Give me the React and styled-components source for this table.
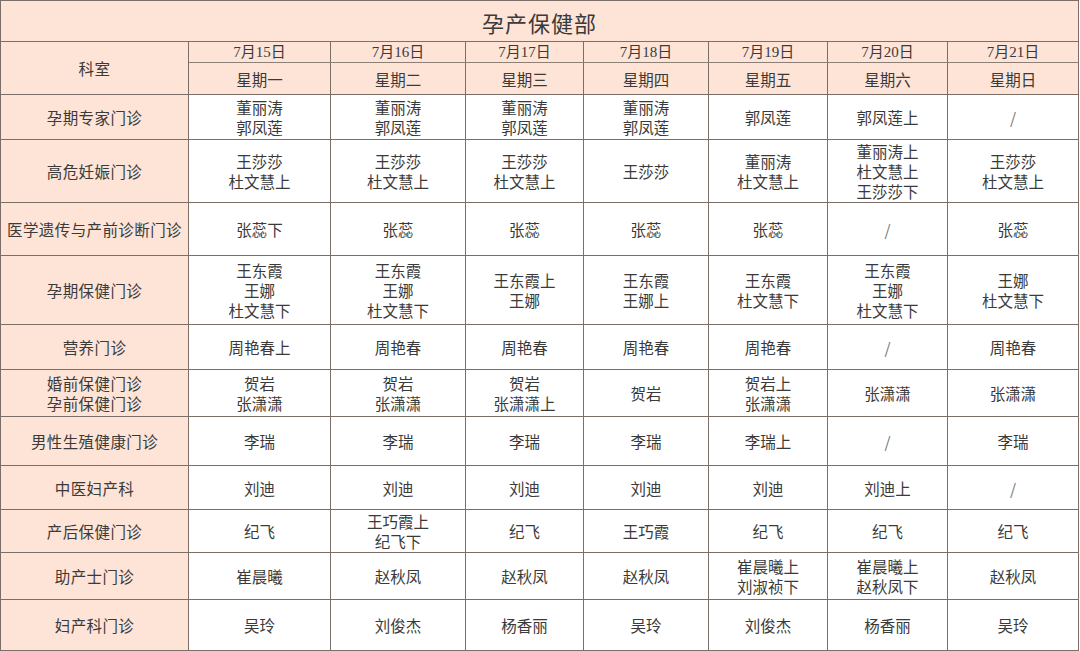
import React from 'react';
import styled, { createGlobalStyle } from 'styled-components';

const GlobalStyle = createGlobalStyle`
  html, body {
    margin: 0;
    padding: 0;
    background: #fff;
  }
  body {
    font-family: "Noto Sans CJK SC", "Noto Sans", sans-serif;
    color: #3a3a3a;
  }
`;

const Table = styled.table`
  width: 1079px;
  table-layout: fixed;
  border-collapse: collapse;
  font-size: 15.5px;
  line-height: 20px;
`;

const Row = styled.tr`
  height: ${props => props.h}px;
`;

const Cell = styled.td`
  border: 1px solid #7a6e66;
  padding: 0;
  text-align: center;
  vertical-align: middle;
  background: ${props => (props.peach ? '#fde4d7' : '#fff')};
  white-space: nowrap;
`;

const TitleCell = styled(Cell)`
  font-size: 22px;
  letter-spacing: 1px;
  padding-top: 1px;
`;

const DateCell = styled(Cell)`
  font-family: "Liberation Serif", "Noto Sans CJK SC", serif;
  font-size: 15px;
  line-height: 18px;
  border-bottom-color: #8c7f76;
`;

const DeptCell = styled(Cell)`
  letter-spacing: 0.4px;
`;

const Line = styled.div`
  color: ${props => (props.dim ? '#777' : 'inherit')};
`;

const cols = [188, 142, 135, 118, 125, 119, 120, 131];

const days = [
  ['7月15日', '星期一'],
  ['7月16日', '星期二'],
  ['7月17日', '星期三'],
  ['7月18日', '星期四'],
  ['7月19日', '星期五'],
  ['7月20日', '星期六'],
  ['7月21日', '星期日'],
];

const rows = [
  {
    dept: '孕期专家门诊',
    h: 45,
    cells: ['董丽涛\n郭凤莲', '董丽涛\n郭凤莲', '董丽涛\n郭凤莲', '董丽涛\n郭凤莲', '郭凤莲', '郭凤莲上', '/'],
  },
  {
    dept: '高危妊娠门诊',
    h: 63,
    cells: ['王莎莎\n杜文慧上', '王莎莎\n杜文慧上', '王莎莎\n杜文慧上', '王莎莎', '董丽涛\n杜文慧上', '董丽涛上\n杜文慧上\n王莎莎下', '王莎莎\n杜文慧上'],
  },
  {
    dept: '医学遗传与产前诊断门诊',
    h: 53,
    cells: ['张蕊下', '张蕊', '张蕊', '张蕊', '张蕊', '/', '张蕊'],
  },
  {
    dept: '孕期保健门诊',
    h: 69,
    cells: ['王东霞\n王娜\n杜文慧下', '王东霞\n王娜\n杜文慧下', '王东霞上\n王娜', '王东霞\n王娜上', '王东霞\n杜文慧下', '王东霞\n王娜\n杜文慧下', '王娜\n杜文慧下'],
  },
  {
    dept: '营养门诊',
    h: 45,
    cells: ['周艳春上', '周艳春', '周艳春', '周艳春', '周艳春', '/', '周艳春'],
  },
  {
    dept: '婚前保健门诊\n孕前保健门诊',
    h: 47,
    cells: ['贺岩\n张潇潇', '贺岩\n张潇潇', '贺岩\n张潇潇上', '贺岩', '贺岩上\n张潇潇', '张潇潇', '张潇潇'],
  },
  {
    dept: '男性生殖健康门诊',
    h: 49,
    cells: ['李瑞', '李瑞', '李瑞', '李瑞', '李瑞上', '/', '李瑞'],
  },
  {
    dept: '中医妇产科',
    h: 44,
    cells: ['刘迪', '刘迪', '刘迪', '刘迪', '刘迪', '刘迪上', '/'],
  },
  {
    dept: '产后保健门诊',
    h: 43,
    cells: ['纪飞', '王巧霞上\n纪飞下', '纪飞', '王巧霞', '纪飞', '纪飞', '纪飞'],
  },
  {
    dept: '助产士门诊',
    h: 47,
    cells: ['崔晨曦', '赵秋凤', '赵秋凤', '赵秋凤', '崔晨曦上\n刘淑祯下', '崔晨曦上\n赵秋凤下', '赵秋凤'],
  },
  {
    dept: '妇产科门诊',
    h: 51,
    cells: ['吴玲', '刘俊杰', '杨香丽', '吴玲', '刘俊杰', '杨香丽', '吴玲'],
  },
];

const Lines = ({ text }) =>
  text.split('\n').map((t, i) => (
    <Line key={i} dim={t === '/'}>
      {t}
    </Line>
  ));

const App = () => {
  return (
    <>
      <GlobalStyle />
      <Table>
        <colgroup>
          {cols.map((w, i) => (
            <col key={i} style={{ width: w }} />
          ))}
        </colgroup>
        <tbody>
          <Row h={41}>
            <TitleCell peach colSpan={8}>孕产保健部</TitleCell>
          </Row>
          <Row h={21}>
            <DeptCell peach rowSpan={2}>科室</DeptCell>
            {days.map(d => (
              <DateCell peach key={d[0]}>{d[0]}</DateCell>
            ))}
          </Row>
          <Row h={32}>
            {days.map(d => (
              <Cell peach key={d[1]}>{d[1]}</Cell>
            ))}
          </Row>
          {rows.map(r => (
            <Row h={r.h} key={r.dept}>
              <DeptCell peach>
                <Lines text={r.dept} />
              </DeptCell>
              {r.cells.map((c, i) => (
                <Cell key={i}>
                  <Lines text={c} />
                </Cell>
              ))}
            </Row>
          ))}
        </tbody>
      </Table>
    </>
  );
};

export default App;
